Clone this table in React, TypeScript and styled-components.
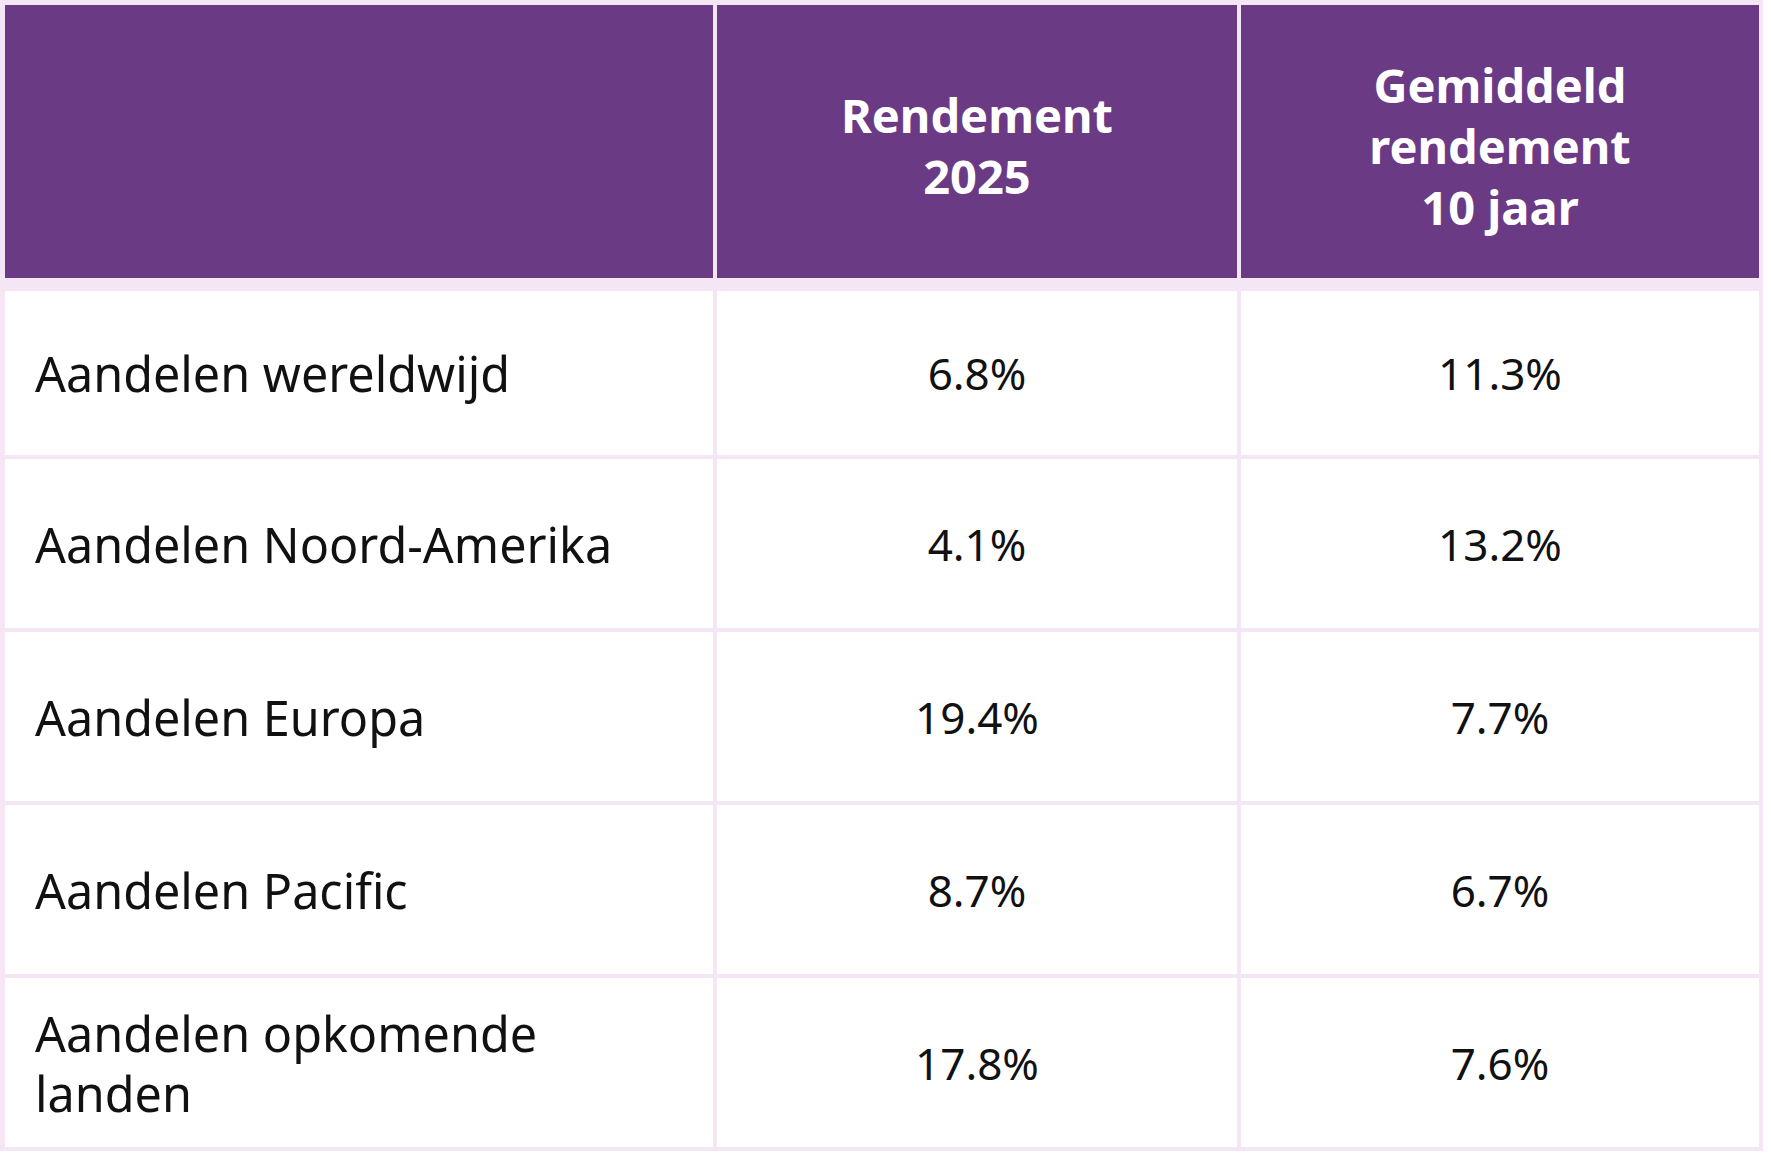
import React from 'react';
import styled, { createGlobalStyle } from 'styled-components';

const GlobalStyle = createGlobalStyle`
  body {
    margin: 0;
    background: #ffffff;
    font-family: 'Noto Sans', 'Open Sans', sans-serif;
  }
`;

// rij-data voor de tabel
const rows = [
  { name: 'Aandelen wereldwijd', year: '6.8%', avg: '11.3%' },
  { name: 'Aandelen Noord-Amerika', year: '4.1%', avg: '13.2%' },
  { name: 'Aandelen Europa', year: '19.4%', avg: '7.7%' },
  { name: 'Aandelen Pacific', year: '8.7%', avg: '6.7%' },
  { name: 'Aandelen opkomende landen', year: '17.8%', avg: '7.6%' },
];

const App = () => {
  return (
    <>
      <GlobalStyle />
      <Table>
        <HeaderRow>
          <HeadCell />
          <HeadCell>
            Rendement
            <br />
            2025
          </HeadCell>
          <HeadCell>
            Gemiddeld
            <br />
            rendement
            <br />
            10 jaar
          </HeadCell>
        </HeaderRow>
        {rows.map((row, i) => (
          <Row key={row.name} first={i === 0}>
            <NameCell>{row.name}</NameCell>
            <ValueCell>{row.year}</ValueCell>
            <ValueCell>{row.avg}</ValueCell>
          </Row>
        ))}
      </Table>
    </>
  );
};

export default App;

const Table = styled.div`
  width: 1763px;
  box-sizing: border-box;
  padding: 5px 4px 4px 5px;
  background: #f4e6f5;
  display: flex;
  flex-direction: column;
  gap: 4px;
`;

const HeaderRow = styled.div`
  display: grid;
  grid-template-columns: 708px 520px 518px;
  column-gap: 4px;
  height: 273px;
  margin-bottom: 9px;
`;

const HeadCell = styled.div`
  background: #6b3a85;
  color: #ffffff;
  font-weight: 700;
  font-size: 47px;
  line-height: 61px;
  padding-top: 9px;
  display: flex;
  align-items: center;
  justify-content: center;
  text-align: center;
`;

const Row = styled.div<{ first?: boolean }>`
  display: grid;
  grid-template-columns: 708px 520px 518px;
  column-gap: 4px;
  height: ${(props) => (props.first ? '164px' : '169px')};
`;

const NameCell = styled.div`
  background: #ffffff;
  color: #111111;
  font-size: 48.5px;
  line-height: 60px;
  padding: 0 40px 0 30px;
  display: flex;
  align-items: center;
`;

const ValueCell = styled.div`
  background: #ffffff;
  color: #111111;
  font-size: 44px;
  display: flex;
  align-items: center;
  justify-content: center;
`;
